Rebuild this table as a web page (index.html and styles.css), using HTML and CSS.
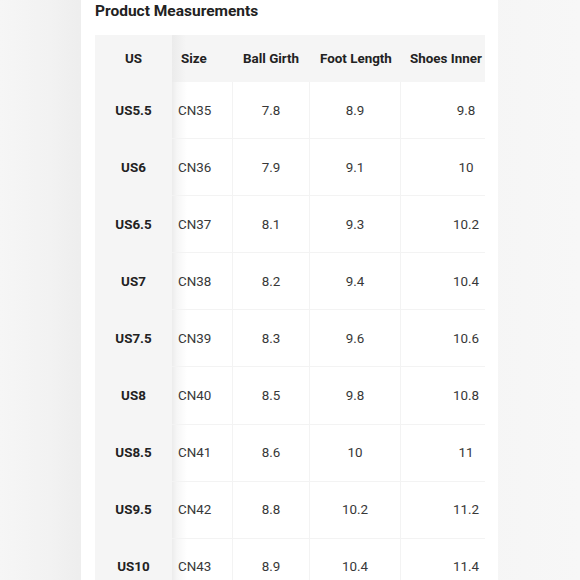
FILE: index.html
```html
<!DOCTYPE html>
<html lang="en">
<head>
<meta charset="utf-8">
<title>Product Measurements</title>
<link rel="stylesheet" href="styles.css">
</head>
<body>
<div class="page">
  <div class="card">
    <h2 class="title">Product Measurements</h2>
    <div class="table-wrap">
      <table class="size-table">
        <colgroup>
          <col class="c-us"><col class="c-size"><col class="c-girth"><col class="c-foot"><col class="c-inner">
        </colgroup>
        <thead>
          <tr>
            <th class="us">US</th>
            <th class="size">Size</th>
            <th class="num">Ball Girth</th>
            <th class="num">Foot Length</th>
            <th class="inner">Shoes Inner</th>
          </tr>
        </thead>
        <tbody>
          <tr><td class="us">US5.5</td><td class="size">CN35</td><td class="num">7.8</td><td class="num">8.9</td><td class="inner">9.8</td></tr>
          <tr><td class="us">US6</td><td class="size">CN36</td><td class="num">7.9</td><td class="num">9.1</td><td class="inner">10</td></tr>
          <tr><td class="us">US6.5</td><td class="size">CN37</td><td class="num">8.1</td><td class="num">9.3</td><td class="inner">10.2</td></tr>
          <tr><td class="us">US7</td><td class="size">CN38</td><td class="num">8.2</td><td class="num">9.4</td><td class="inner">10.4</td></tr>
          <tr><td class="us">US7.5</td><td class="size">CN39</td><td class="num">8.3</td><td class="num">9.6</td><td class="inner">10.6</td></tr>
          <tr><td class="us">US8</td><td class="size">CN40</td><td class="num">8.5</td><td class="num">9.8</td><td class="inner">10.8</td></tr>
          <tr><td class="us">US8.5</td><td class="size">CN41</td><td class="num">8.6</td><td class="num">10</td><td class="inner">11</td></tr>
          <tr><td class="us">US9.5</td><td class="size">CN42</td><td class="num">8.8</td><td class="num">10.2</td><td class="inner">11.2</td></tr>
          <tr><td class="us">US10</td><td class="size">CN43</td><td class="num">8.9</td><td class="num">10.4</td><td class="inner">11.4</td></tr>
        </tbody>
      </table>
    </div>
  </div>
</div>
</body>
</html>
```

FILE: styles.css
```css
* { box-sizing: border-box; }

html, body {
  margin: 0;
  padding: 0;
  height: 580px;
  overflow: hidden;
}

body {
  font-family: Roboto, "Liberation Sans", Arial, sans-serif;
  background: linear-gradient(90deg, #f6f6f6 0px, #f2f2f2 50px, #eeeeee 78px, #f7f7f7 100%);
  color: #333;
}

.page {
  display: flex;
  height: 580px;
}

.card {
  margin-left: 81px;
  width: 417px;
  height: 580px;
  background: #ffffff;
  padding-left: 14px;
}

.title {
  margin: 0 0 13px 0;
  font-size: 15.5px;
  line-height: 22px;
  font-weight: 700;
  color: #222;
}

.table-wrap {
  width: 390px;
  overflow: hidden;
}

.size-table {
  border-collapse: separate;
  border-spacing: 0;
  table-layout: fixed;
  width: 436px;
  font-size: 13.4px;
}

.c-us { width: 77px; }
.c-size { width: 61px; }
.c-girth { width: 77px; }
.c-foot { width: 91px; }
.c-inner { width: 130px; }

.size-table th {
  height: 47px;
  padding: 0 10px;
  background: #f5f5f5;
  font-weight: 700;
  color: #222;
  text-align: left;
  white-space: nowrap;
}

.size-table th.us { text-align: center; }
.size-table th.size {
  padding-left: 9px;
  background: linear-gradient(90deg, #ebebeb 0px, #f5f5f5 14px);
}
.size-table th.inner { padding-left: 9px; }

.size-table td {
  height: 57.1px;
  padding: 0;
  text-align: center;
  color: #383838;
  border-bottom: 1px solid #f3f3f3;
  white-space: nowrap;
}

.size-table td.us {
  background: #f5f5f5;
  font-weight: 700;
  color: #222;
  border-bottom-color: #f5f5f5;
}

.size-table td.size {
  text-align: left;
  padding-left: 6px;
  background: linear-gradient(90deg, #ececec 0px, #f6f6f6 5px, #ffffff 15px);
  border-right: 1px solid #f3f3f3;
}

.size-table td.num {
  border-right: 1px solid #f3f3f3;
}
```
